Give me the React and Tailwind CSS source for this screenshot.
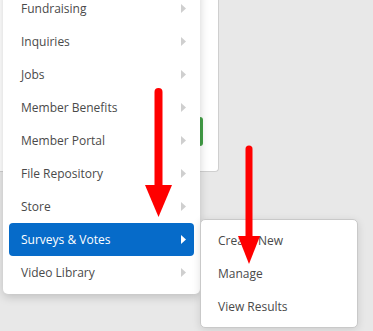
const menuItems = [
  'Fundraising',
  'Inquiries',
  'Jobs',
  'Member Benefits',
  'Member Portal',
  'File Repository',
  'Store',
  'Surveys & Votes',
  'Video Library',
];

const subItems = ['Create New', 'Manage', 'View Results'];

const Chevron = ({ active }) => (
  <svg width="5" height="9" viewBox="0 0 5 9">
    <polygon points="0,0 5,4.5 0,9" fill={active ? '#ffffff' : '#cfcfcf'} />
  </svg>
);

const App = () => {
  return (
    <div className="relative h-[331px] w-[373px] overflow-hidden bg-[#e8e8e8] font-['Open_Sans',sans-serif] text-[12px] text-[#4a4a4a]">
      {/* page card behind the dropdown */}
      <div className="h-[172px] w-[219px] rounded-br-[4px] border-r border-b border-[#cfcfcf] bg-white pt-[117px]">
        <div className="ml-[150px] h-[29px] w-[53px] rounded-r-[3px] bg-[#43a047]" />
      </div>

      {/* main dropdown */}
      <div className="absolute left-[3px] top-[-12px] w-[197px] rounded-b-[5px] bg-white px-[6px] pt-[4px] pb-[5px] shadow-[0_3px_10px_rgba(0,0,0,0.18)]">
        {menuItems.map((item) => {
          const active = item === 'Surveys & Votes';
          return (
            <div
              key={item}
              className={`flex h-[33px] items-center justify-between rounded-[4px] pl-[12px] pr-[8px] ${
                active ? 'bg-[#066bc9] text-white' : ''
              }`}
            >
              <span>{item}</span>
              <Chevron active={active} />
            </div>
          );
        })}
      </div>

      {/* submenu */}
      <div className="absolute left-[200px] top-[219px] h-[109px] w-[158px] rounded-[5px] border border-[#c9c9c9] bg-white px-[5px] py-[4px] shadow-[0_2px_8px_rgba(0,0,0,0.12)]">
        {subItems.map((item) => (
          <div key={item} className="flex h-[33px] items-center pl-[12px]">
            {item}
          </div>
        ))}
      </div>

      {/* annotation arrows */}
      <svg className="absolute inset-0" width="373" height="331" viewBox="0 0 373 331">
        <line x1="158.5" y1="92" x2="158.5" y2="190" stroke="#ff0000" strokeWidth="8" strokeLinecap="round" />
        <polygon points="145,185 172,185 158.5,217" fill="#ff0000" />
        <line x1="249" y1="149" x2="249" y2="240" stroke="#ff0000" strokeWidth="7" strokeLinecap="round" />
        <polygon points="238,236 260,236 249,264" fill="#ff0000" />
      </svg>
    </div>
  );
};

export default App;
